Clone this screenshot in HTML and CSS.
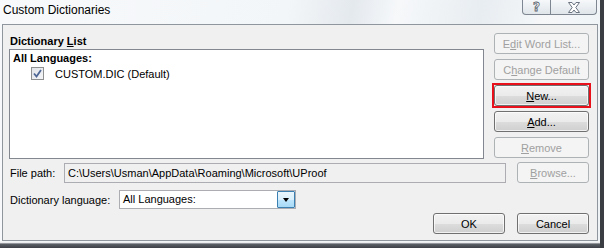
FILE: index.html
```html
<!DOCTYPE html>
<html lang="en">
<head>
  <meta charset="UTF-8" />
  <title>Custom Dictionaries</title>
  <link rel="stylesheet" href="styles.css">
</head>
<body>
  <div class="window">
    <div class="titlebar">
      <span class="title">Custom Dictionaries</span>
      <div class="caption-btns">
        <span class="cap-btn help">?</span>
        <span class="cap-btn close">
          <svg width="14" height="11" viewBox="0 0 14 11">
            <path d="M1.5 0.5 H5 L7 3 L9 0.5 H12.5 L8.8 5.5 L12.5 10.5 H9 L7 8 L5 10.5 H1.5 L5.2 5.5 Z" fill="#fff" stroke="#6b7480" stroke-width="1"/>
          </svg>
        </span>
      </div>
    </div>

    <div class="client">
      <div class="main-row">
        <div class="group">
          <div class="group-label">Dictionary <u>L</u>ist</div>
          <div class="listbox">
            <div class="list-head">All Languages:</div>
            <div class="list-item">
              <span class="checkbox">
                <svg width="9" height="9" viewBox="0 0 9 9">
                  <path d="M1 4.5 L3.5 7.5 L8 1" fill="none" stroke="#4f6795" stroke-width="1.8"/>
                </svg>
              </span>
              <span>CUSTOM.DIC (Default)</span>
            </div>
          </div>
        </div>
        <div class="btn-col">
          <button class="btn disabled">E<u>d</u>it Word List...</button>
          <button class="btn disabled">C<u>h</u>ange Default</button>
          <div class="highlight">
            <button class="btn"><u>N</u>ew...</button>
          </div>
          <button class="btn"><u>A</u>dd...</button>
          <button class="btn disabled"><u>R</u>emove</button>
        </div>
      </div>

      <div class="row path-row">
        <span class="label">File path:</span>
        <div class="path-box">C:\Users\Usman\AppData\Roaming\Microsoft\UProof</div>
        <button class="btn disabled browse"><u>B</u>rowse...</button>
      </div>

      <div class="row lang-row">
        <span class="label">Dictionary language:</span>
        <div class="select">
          <span class="select-value">All Languages:</span>
          <span class="select-arrow"></span>
        </div>
      </div>

      <div class="row footer">
        <button class="btn action">OK</button>
        <button class="btn action">Cancel</button>
      </div>
    </div>
    <div class="shadow"></div>
  </div>
</body>
</html>
```

FILE: styles.css
```css
body {
  margin: 0;
  width: 604px;
  height: 248px;
  overflow: hidden;
  font-family: "Liberation Sans", Arial, sans-serif;
  font-size: 11px;
  color: #000;
  background: #f4f6f8;
}
.window {
  width: 604px;
  height: 248px;
  display: flex;
  flex-direction: column;
  box-sizing: border-box;
  border-right: 4px solid #3a3d42;
  background: linear-gradient(100deg, #f7f9fb 0%, #f3f6f8 45%, #e4e9ee 55%, #f6f8fa 62%, #e8edf1 75%, #f5f7f9 85%, #eef2f5 100%);
}
.titlebar {
  height: 24px;
  display: flex;
  justify-content: space-between;
  align-items: flex-start;
  flex-shrink: 0;
}
.title {
  padding: 2px 0 0 3px;
  font-size: 12px;
  line-height: 16px;
  color: #000;
}
.caption-btns {
  display: flex;
  height: 14px;
  margin-right: 3px;
  border: 1px solid #7d8691;
  border-top: none;
  border-radius: 0 0 4px 4px;
  background: linear-gradient(#f6f8fa, #dfe5ea);
}
.cap-btn {
  display: flex;
  justify-content: center;
  align-items: center;
}
.help {
  width: 27px;
  border-right: 1px solid #7d8691;
  font-family: "DejaVu Sans", sans-serif;
  font-size: 12px;
  font-weight: bold;
  color: #fff;
  -webkit-text-stroke: 0.8px #59626d;
}
.close {
  width: 45px;
}
.client {
  margin-left: 2px;
  width: 596px;
  height: 217px;
  box-sizing: border-box;
  border: 1px solid #8f969e;
  background: #f0f0f0;
  padding: 8px 8px 0 6px;
  display: flex;
  flex-direction: column;
}
.main-row {
  display: flex;
  gap: 10px;
}
.group {
  width: 475px;
}
.group-label {
  font-weight: bold;
  line-height: 16px;
  padding-left: 1px;
}
.listbox {
  height: 110px;
  box-sizing: border-box;
  border: 1px solid #828790;
  background: #fff;
  padding: 1px 3px;
}
.list-head {
  font-weight: bold;
  line-height: 14px;
}
.list-item {
  display: flex;
  align-items: center;
  gap: 11px;
  padding-left: 18px;
  margin-top: 2px;
}
.checkbox {
  width: 11px;
  height: 11px;
  border: 1px solid #8e8f8f;
  background: linear-gradient(135deg, #e1e4e8, #f4f5f7);
  display: flex;
  justify-content: center;
  align-items: center;
}
.btn-col {
  display: flex;
  flex-direction: column;
  gap: 5px;
  width: 95px;
}
.btn {
  height: 21px;
  box-sizing: border-box;
  border: 1px solid #707070;
  border-radius: 3px;
  background: linear-gradient(#f2f2f2 0%, #ebebeb 50%, #dddddd 51%, #cfcfcf 100%);
  font-family: inherit;
  font-size: 11px;
  color: #000;
  padding: 0;
  box-shadow: inset 0 0 0 1px rgba(255, 255, 255, 0.7);
}
.btn.disabled {
  border-color: #adb2b5;
  background: #f4f4f4;
  color: #a0a0a0;
  box-shadow: none;
}
.highlight {
  display: flex;
  margin: -2px;
  border: 2px solid #e8101a;
}
.highlight .btn {
  flex: 1;
}
.row {
  display: flex;
  align-items: center;
}
.label {
  padding-left: 1px;
}
.path-row {
  margin-top: 3px;
}
.path-row .label {
  width: 54px;
}
.path-box {
  width: 442px;
  height: 20px;
  box-sizing: border-box;
  border: 1px solid #abadb3;
  background: #f0f0f0;
  line-height: 18px;
  padding-left: 3px;
  margin-right: 11px;
  white-space: nowrap;
}
.browse {
  width: 72px;
}
.lang-row {
  margin-top: 7px;
}
.lang-row .label {
  width: 109px;
}
.select {
  width: 177px;
  height: 19px;
  box-sizing: border-box;
  border: 1px solid #abadb3;
  background: #fff;
  display: flex;
  justify-content: space-between;
}
.select-value {
  line-height: 17px;
  padding-left: 3px;
}
.select-arrow {
  width: 18px;
  box-sizing: border-box;
  border: 1px solid #3c7fb1;
  border-radius: 1px;
  background: linear-gradient(#eaf6fd 0%, #d9f0fc 50%, #bee6fd 51%, #a7d9f5 100%);
  display: flex;
  justify-content: center;
  align-items: center;
}
.select-arrow::after {
  content: "";
  border-left: 3.5px solid transparent;
  border-right: 3.5px solid transparent;
  border-top: 4px solid #000;
}
.footer {
  justify-content: flex-end;
  gap: 12px;
  margin-top: 4px;
}
.action {
  width: 72px;
}
.shadow {
  margin-left: 0;
  height: 7px;
  background: linear-gradient(#f2f4f6 0%, #f2f4f6 20%, #5a5f66 45%, #3d4046 100%);
}
```
